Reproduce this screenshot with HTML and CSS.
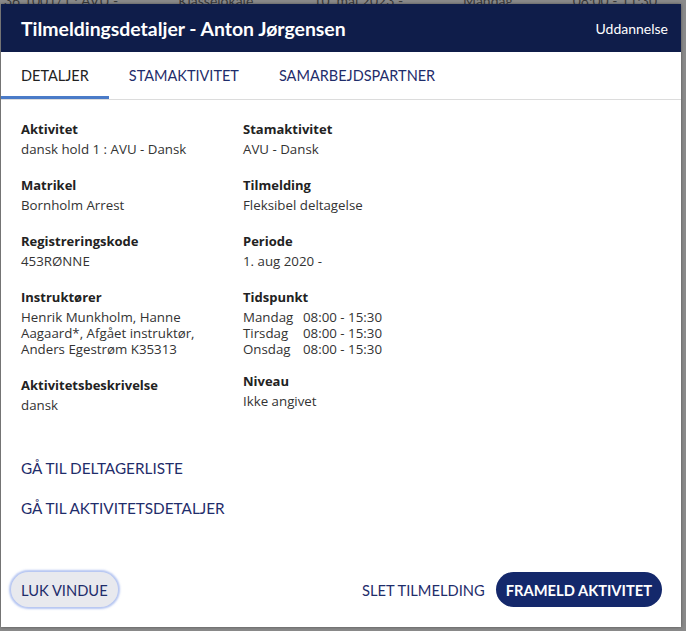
FILE: index.html
```html
<!DOCTYPE html>
<html lang="da">
<head>
<meta charset="utf-8">
<title>Tilmeldingsdetaljer</title>
<link rel="stylesheet" href="styles.css">
</head>
<body>
<div class="backdrop-page">
  <div class="bg-row"><span>36 1001/1 : AVU -</span><span>Klasselokale</span><span>10. maj 2023 -</span><span>Mandag</span><span>08:00 - 11:30</span><span>Teams</span></div>
</div>
<div class="modal">
  <header class="modal-header">
    <h1 class="modal-title">Tilmeldingsdetaljer - Anton Jørgensen</h1>
    <span class="modal-context">Uddannelse</span>
  </header>
  <nav class="tabs">
    <a class="tab tab-active">DETALJER</a>
    <a class="tab">STAMAKTIVITET</a>
    <a class="tab">SAMARBEJDSPARTNER</a>
  </nav>
  <section class="details">
    <div class="col">
      <div class="field"><div class="label">Aktivitet</div><div class="value">dansk hold 1 : AVU - Dansk</div></div>
      <div class="field"><div class="label">Matrikel</div><div class="value">Bornholm Arrest</div></div>
      <div class="field"><div class="label">Registreringskode</div><div class="value">453RØNNE</div></div>
      <div class="field"><div class="label">Instruktører</div><div class="value">Henrik Munkholm, Hanne<br>Aagaard*, Afgået instruktør,<br>Anders Egestrøm K35313</div></div>
      <div class="field"><div class="label">Aktivitetsbeskrivelse</div><div class="value">dansk</div></div>
    </div>
    <div class="col">
      <div class="field"><div class="label">Stamaktivitet</div><div class="value">AVU - Dansk</div></div>
      <div class="field"><div class="label">Tilmelding</div><div class="value">Fleksibel deltagelse</div></div>
      <div class="field"><div class="label">Periode</div><div class="value">1. aug 2020 -</div></div>
      <div class="field field-tight"><div class="label">Tidspunkt</div>
        <div class="schedule">
          <span>Mandag</span><span>08:00 - 15:30</span>
          <span>Tirsdag</span><span>08:00 - 15:30</span>
          <span>Onsdag</span><span>08:00 - 15:30</span>
        </div>
      </div>
      <div class="field"><div class="label">Niveau</div><div class="value">Ikke angivet</div></div>
    </div>
  </section>
  <div class="links">
    <a class="link">GÅ TIL DELTAGERLISTE</a>
    <a class="link">GÅ TIL AKTIVITETSDETALJER</a>
  </div>
  <footer class="actions">
    <button class="btn btn-close">LUK VINDUE</button>
    <div class="actions-right">
      <button class="btn btn-text">SLET TILMELDING</button>
      <button class="btn btn-primary">FRAMELD AKTIVITET</button>
    </div>
  </footer>
</div>
</body>
</html>
```
FILE: styles.css
```css
html, body {
  margin: 0;
  padding: 0;
}
body {
  width: 686px;
  height: 631px;
  background: #8a8a8a;
  font-family: "Lato", "DejaVu Sans", sans-serif;
  overflow: hidden;
  position: relative;
}
.backdrop-page {
  height: 631px;
}
.bg-row {
  display: flex;
  gap: 60px;
  padding: 0 0 0 4px;
  margin-top: -8px;
  font-size: 14px;
  color: #3a3a3a;
  white-space: nowrap;
}
.modal {
  position: absolute;
  left: 1px;
  top: 4px;
  width: 680px;
  height: 623px;
  background: #fff;
  display: flex;
  flex-direction: column;
  box-shadow: 0 0 3px rgba(0,0,0,0.4);
}
.modal-header {
  height: 48px;
  background: #0f1d4a;
  display: flex;
  align-items: center;
  justify-content: space-between;
  padding: 0 13px 0 20px;
  color: #fff;
}
.modal-title {
  margin: 0;
  font-size: 19.4px;
  font-weight: 700;
}
.modal-context {
  font-size: 14px;
}
.tabs {
  display: flex;
  height: 47px;
  border-bottom: 1px solid #dcdcdc;
}
.tab {
  display: flex;
  align-items: center;
  padding: 0 20px;
  font-size: 14.5px;
  color: #1f2d6b;
}
.tab-active {
  color: #222;
  box-shadow: inset 0 -3px 0 #4a7bc8;
}
.details {
  display: flex;
  padding: 21px 20px 0 20px;
  font-family: "Open Sans", "Lato", sans-serif;
}
.col {
  display: flex;
  flex-direction: column;
}
.col:first-child {
  width: 222px;
}
.field {
  margin-bottom: 20px;
}
.field-tight {
  margin-bottom: 16px;
}
.label {
  font-size: 13px;
  font-weight: 700;
  color: #222;
  line-height: 16px;
  margin-bottom: 4px;
}
.value {
  font-size: 13.3px;
  color: #333;
  line-height: 16px;
}
.schedule {
  display: grid;
  grid-template-columns: 60px auto;
  font-size: 13.3px;
  color: #333;
  line-height: 16px;
}
.links {
  display: flex;
  flex-direction: column;
  gap: 22px;
  padding: 26px 20px 0 20px;
}
.link {
  font-size: 15.3px;
  color: #1f2d6b;
  line-height: 18px;
}
.actions {
  margin-top: auto;
  display: flex;
  align-items: center;
  justify-content: space-between;
  padding: 0 19px 20px 10px;
}
.actions-right {
  display: flex;
  align-items: center;
  gap: 11px;
}
.btn {
  font-family: "Lato", "DejaVu Sans", sans-serif;
  font-size: 14.7px;
  border: none;
  height: 35px;
  border-radius: 18px;
  padding: 0 10px;
  cursor: pointer;
}
.btn-close {
  background: #e8e9ee;
  color: #1f2d6b;
  box-shadow: 0 0 2px 2px rgba(120,150,230,0.55);
}
.btn-text {
  background: transparent;
  color: #1f2d6b;
  padding: 0;
}
.btn-primary {
  background: #14286b;
  color: #fff;
  font-weight: 700;
}
```
